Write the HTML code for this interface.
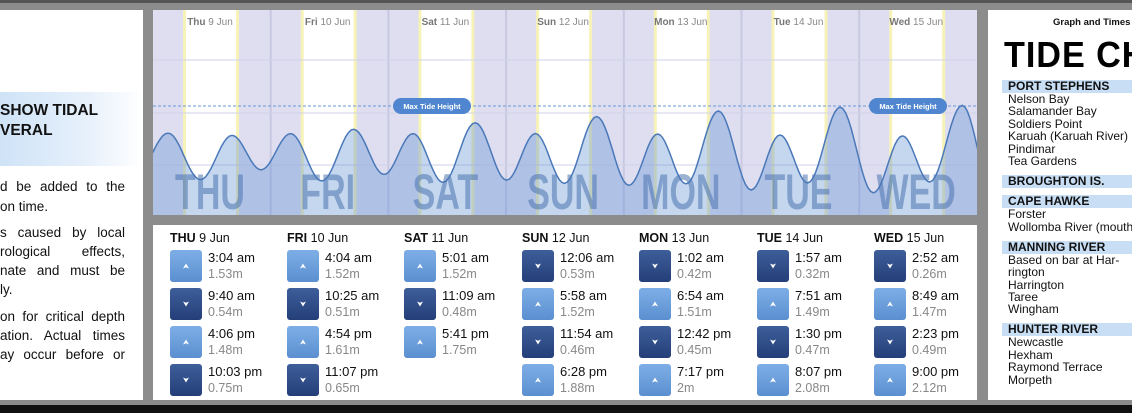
<!DOCTYPE html>
<html><head><meta charset="utf-8">
<style>
*{margin:0;padding:0;box-sizing:border-box}
body{width:1132px;height:413px;background:#8c8c8c;position:relative;overflow:hidden;font-family:"Liberation Sans",Arial,sans-serif}
.topbar{position:absolute;left:0;top:0;width:1132px;height:3px;background:#555}
.botbar{position:absolute;left:0;top:405px;width:1132px;height:8px;background:#111}
.panel{position:absolute;background:#fff}
#left{left:0;top:10px;width:143px;height:390px}
#left .hd{position:absolute;left:0;top:82px;width:143px;height:74px;background:linear-gradient(90deg,#cfe3f7 0%,#e6f0fb 60%,#fff 100%);font-weight:bold;font-size:15.5px;color:#111;padding:9px 0 0 0;line-height:20px}
#left .l{position:absolute;left:0;width:125px;font-size:13.5px;line-height:16px;color:#111;text-align:justify;text-align-last:justify;white-space:nowrap}
#left .l.e{text-align-last:left}
#chart{left:153px;top:10px;width:824px;height:205px;overflow:hidden;background:#dedef0}
#table{left:153px;top:225px;width:824px;height:175px}
.col{position:absolute;top:0;width:117px}
.col .h{position:absolute;top:6px;left:0;font-size:12.5px;color:#111;white-space:nowrap}
.col .h b{font-weight:bold}
.row{position:absolute;left:0;width:117px;height:32px}
.btn{position:absolute;left:0;top:0;width:32px;height:32px;border-radius:3px}
.up{background:linear-gradient(#7eaee6,#5b8fd0)}
.dn{background:linear-gradient(#3e5f9a,#243f78)}
.btn svg{position:absolute;left:12px;top:12px}
.t{position:absolute;left:38px;top:0px;font-size:13px;color:#111;white-space:nowrap}
.m{position:absolute;left:38px;top:17px;font-size:12.5px;color:#888;white-space:nowrap}
#right{left:988px;top:10px;width:144px;height:390px;overflow:hidden}
#right .g{position:absolute;left:65px;top:7px;font-size:9.5px;font-weight:bold;white-space:nowrap;color:#111}
#right .big{position:absolute;left:16px;top:24px;font-size:36px;font-weight:bold;letter-spacing:1px;white-space:nowrap;color:#000;transform:scaleX(0.95);transform-origin:left}
#right .list{position:absolute;left:14px;top:70px;width:140px;font-size:12px;line-height:12.4px;color:#111}
#right .sec{background:#c8def4;font-weight:bold;padding-left:6px;height:13px;line-height:13px}
#right .it{padding-left:6px;white-space:nowrap}
#right .gap{height:7.5px}
</style></head><body>
<div class="topbar"></div>
<div class="panel" id="left">
<div class="hd">SHOW TIDAL<br>VERAL</div>
<div class="l" style="top:169px">d be added to the</div>
<div class="l e" style="top:189px">on time.</div>
<div class="l" style="top:215px">s caused by local</div>
<div class="l" style="top:234px">rological effects,</div>
<div class="l" style="top:253px">nate and must be</div>
<div class="l e" style="top:272px">ly.</div>
<div class="l" style="top:299px">on for critical depth</div>
<div class="l" style="top:318px">ation. Actual times</div>
<div class="l" style="top:337px">ay occur before or</div>
</div>

<div class="panel" id="chart">
<svg id="svg" width="824" height="205" xmlns="http://www.w3.org/2000/svg"></svg>
</div>

<div class="panel" id="table"></div>

<div class="panel" id="right">
<div class="g">Graph and Times</div>
<div class="big">TIDE CHARTS</div>
<div class="list">
<div class="sec">PORT STEPHENS</div>
<div class="it">Nelson Bay</div><div class="it">Salamander Bay</div><div class="it">Soldiers Point</div><div class="it">Karuah (Karuah River)</div><div class="it">Pindimar</div><div class="it">Tea Gardens</div>
<div class="gap"></div>
<div class="sec">BROUGHTON IS.</div>
<div class="gap"></div>
<div class="sec">CAPE HAWKE</div>
<div class="it">Forster</div><div class="it">Wollomba River (mouth)</div>
<div class="gap"></div>
<div class="sec">MANNING RIVER</div>
<div class="it">Based on bar at Har-</div><div class="it">rington</div><div class="it">Harrington</div><div class="it">Taree</div><div class="it">Wingham</div>
<div class="gap"></div>
<div class="sec">HUNTER RIVER</div>
<div class="it">Newcastle</div><div class="it">Hexham</div><div class="it">Raymond Terrace</div><div class="it">Morpeth</div>
</div>
</div>
<div class="botbar"></div>

<script>
var D=117.7;
var days=[["THU","Thu","9"],["FRI","Fri","10"],["SAT","Sat","11"],["SUN","Sun","12"],["MON","Mon","13"],["TUE","Tue","14"],["WED","Wed","15"]];
var ev=[
[0,[[3,4,1.53,"3:04 am"],[9,40,.54,"9:40 am"],[16,6,1.48,"4:06 pm"],[22,3,.75,"10:03 pm"]]],
[1,[[4,4,1.52,"4:04 am"],[10,25,.51,"10:25 am"],[16,54,1.61,"4:54 pm"],[23,7,.65,"11:07 pm"]]],
[2,[[5,1,1.52,"5:01 am"],[11,9,.48,"11:09 am"],[17,41,1.75,"5:41 pm"]]],
[3,[[0,6,.53,"12:06 am"],[5,58,1.52,"5:58 am"],[11,54,.46,"11:54 am"],[18,28,1.88,"6:28 pm"]]],
[4,[[1,2,.42,"1:02 am"],[6,54,1.51,"6:54 am"],[12,42,.45,"12:42 pm"],[19,17,2.0,"7:17 pm"]]],
[5,[[1,57,.32,"1:57 am"],[7,51,1.49,"7:51 am"],[13,30,.47,"1:30 pm"],[20,7,2.08,"8:07 pm"]]],
[6,[[2,52,.26,"2:52 am"],[8,49,1.47,"8:49 am"],[14,23,.49,"2:23 pm"],[21,0,2.12,"9:00 pm"]]]];
var pts=[[-3.2/24,0.7]];
ev.forEach(function(d){d[1].forEach(function(e){pts.push([d[0]+(e[0]+e[1]/60)/24,e[2]]);});});
pts.push([7+3.2/24,0.3]);
function X(t){return t*D}
function Y(h){return 195-47*h}
var s='';
for(var i=0;i<7;i++){
 var x0=i*D;
 s+='<rect x="'+(x0+32)+'" y="0" width="52" height="205" fill="#fff"/>';
 s+='<rect x="'+(x0+30)+'" y="0" width="3" height="205" fill="#f6f2b8"/>';
 s+='<rect x="'+(x0+83)+'" y="0" width="3" height="205" fill="#f6f2b8"/>';
 if(i>0)s+='<rect x="'+(x0-1)+'" y="0" width="2" height="205" fill="#c8c8e2"/>';
 s+='<text x="'+(x0+57)+'" y="15" text-anchor="middle" font-family="Liberation Sans,Arial,sans-serif" font-size="10" fill="#888"><tspan font-weight="bold" fill="#777">'+days[i][1]+'</tspan> '+days[i][2]+' Jun</text>';
}
[50,103,155].forEach(function(y){s+='<line x1="0" x2="824" y1="'+y+'" y2="'+y+'" stroke="#d2d2e8" stroke-width="1"/>';});
s+='<line x1="0" x2="824" y1="96" y2="96" stroke="#6a9ad6" stroke-width="1" stroke-dasharray="3,2"/>';
var d='';
for(var k=0;k<pts.length-1;k++){
 var a=pts[k],b=pts[k+1];
 for(var j=0;j<=12;j++){
  var f=j/12,t=a[0]+(b[0]-a[0])*f,h=a[1]+(b[1]-a[1])*(1-Math.cos(Math.PI*f))/2;
  d+=(d?'L':'M')+X(t).toFixed(1)+','+Y(h).toFixed(1);
 }
}
s+='<path d="'+d+'L'+X(7.2)+',205L'+X(-0.2)+',205Z" fill="rgba(90,140,210,0.35)"/>';
for(var i=0;i<7;i++){
 var cxx=i*D+57;
 s+='<text x="'+cxx+'" y="199" text-anchor="middle" font-family="Liberation Sans,Arial,sans-serif" font-weight="bold" font-size="50" fill="rgba(75,115,175,0.55)" transform="translate('+cxx+',0) scale(0.68,1) translate('+(-cxx)+',0)">'+days[i][0]+'</text>';
}
s+='<path d="'+d+'" fill="none" stroke="#4a78b8" stroke-width="1.5"/>';
[[240,96],[716,96]].forEach(function(p){
 s+='<rect x="'+p[0]+'" y="'+(p[1]-8)+'" width="78" height="16" rx="8" fill="#4f86cf"/>';
 s+='<text x="'+(p[0]+39)+'" y="'+(p[1]+3)+'" text-anchor="middle" font-family="Liberation Sans,Arial,sans-serif" font-weight="bold" font-size="7.5" fill="#fff">Max Tide Height</text>';
});
document.getElementById('svg').innerHTML=s;
var tb='';
var cx=[17,134,251,369,486,604,721];
var upI='<svg width="8" height="8" viewBox="0 0 8 8"><path d="M4 1.5L7 6.5L4 5.2L1 6.5Z" fill="#fff"/></svg>';
var dnI='<svg width="8" height="8" viewBox="0 0 8 8"><path d="M4 6.5L7 1.5L4 2.8L1 1.5Z" fill="#fff"/></svg>';
ev.forEach(function(d,i){
 tb+='<div class="col" style="left:'+cx[i]+'px"><div class="h"><b>'+days[i][0]+'</b> '+days[i][2]+' Jun</div>';
 d[1].forEach(function(e,r){
  var prev=r>0?d[1][r-1][2]:(i==3?1:0);
  var up=(r==0)?(e[2]>1):(e[2]>prev);
  tb+='<div class="row" style="top:'+(25+r*38)+'px"><div class="btn '+(up?'up':'dn')+'">'+(up?upI:dnI)+'</div><div class="t">'+e[3]+'</div><div class="m">'+(e[2]==2?'2':e[2].toFixed(2))+'m</div></div>';
 });
 tb+='</div>';
});
document.getElementById('table').innerHTML=tb;
</script>
</body></html>
